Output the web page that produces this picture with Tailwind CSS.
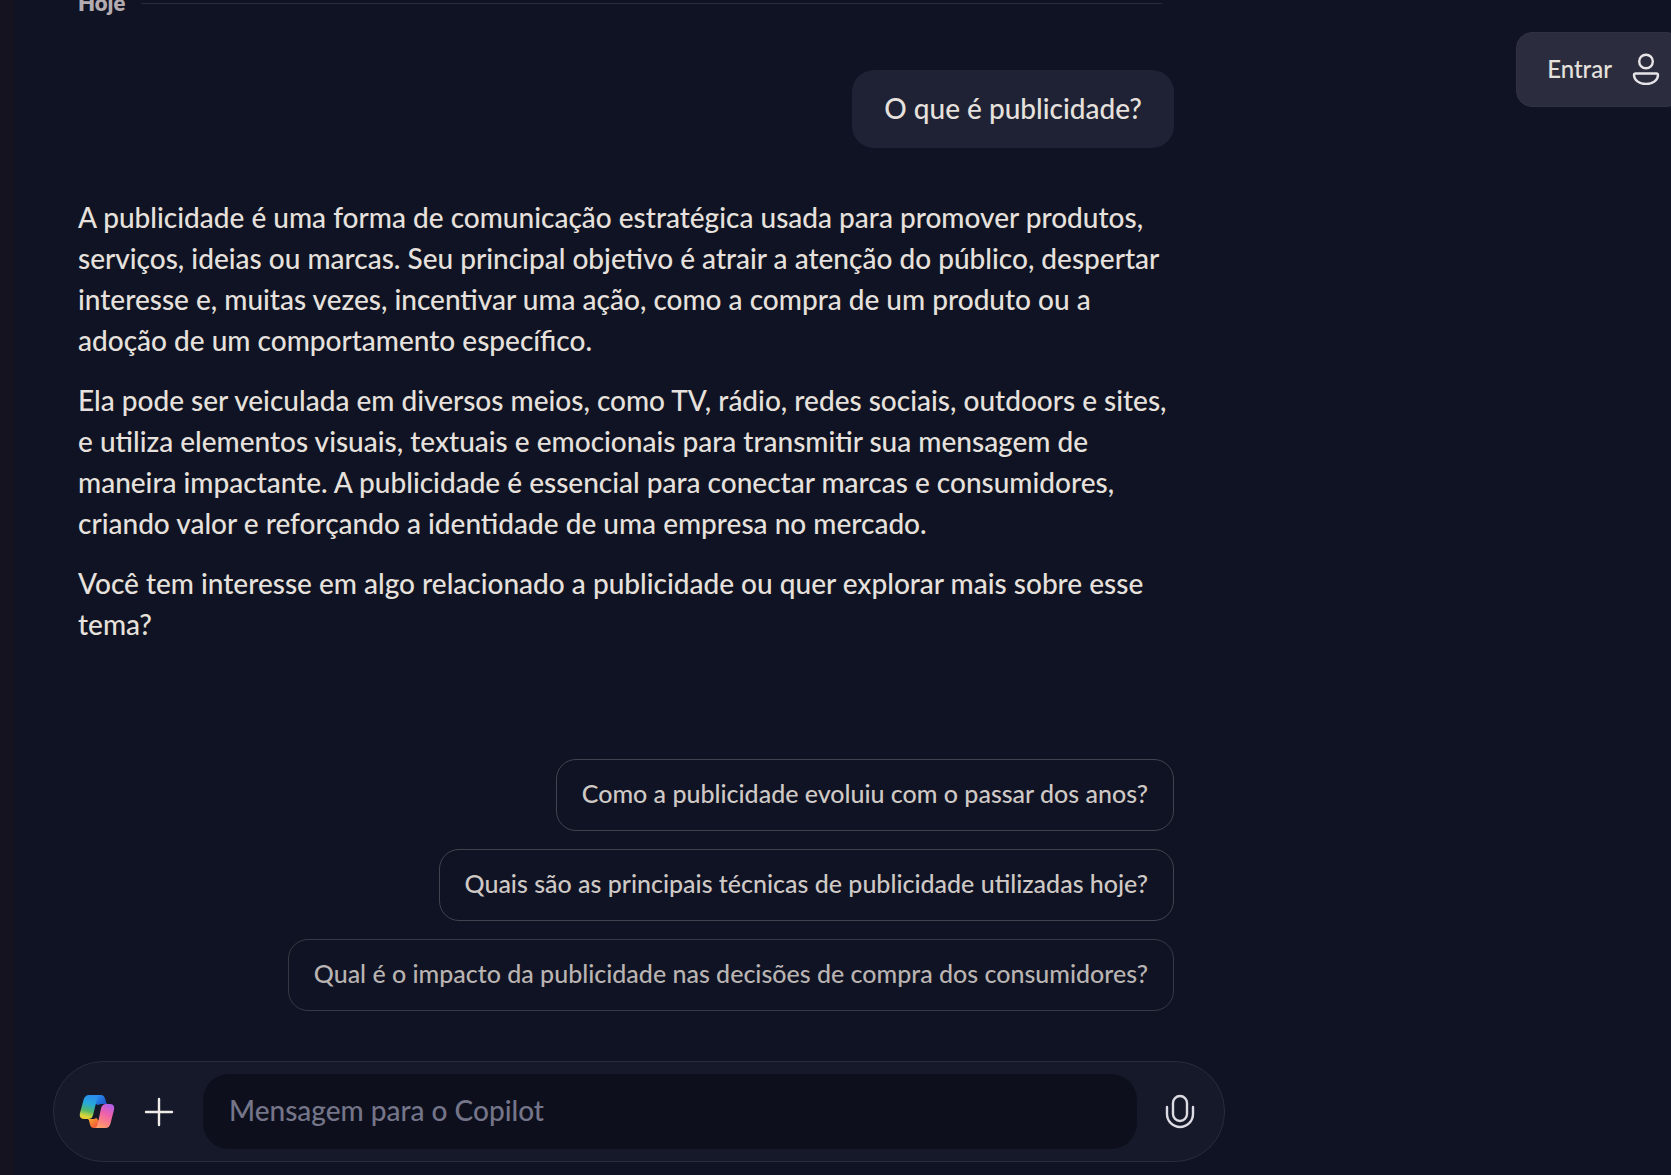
<!DOCTYPE html>
<html lang="pt-BR">
<head>
<meta charset="utf-8">
<meta name="viewport" content="width=device-width, initial-scale=1">
<title>Copilot</title>
<script src="https://cdn.jsdelivr.net/npm/@tailwindcss/browser@4"></script>
</head>
<body class="flex min-h-screen items-start overflow-hidden border-l-14 border-[#14131f] bg-[#101323] pl-[39px] font-['Lato',sans-serif] font-medium text-[#e6e1dd]">
  <main class="max-w-[1172px] flex-1">
    <section class="pr-[51px] pl-[25px]" aria-label="Conversa">
      <div class="-mt-[13px] flex h-8 items-center gap-4 pr-3">
        <h2 class="text-[22px] leading-7 font-extrabold text-[#b3abb0]">Hoje</h2>
        <hr class="flex-1 border-[#2c2b3a]">
      </div>

      <div class="mt-[51px] flex justify-end">
        <p class="rounded-[22px] bg-[#1f2135] px-8 pt-[17px] pb-[19px] text-[28px] leading-[42px]">O que é publicidade?</p>
      </div>

      <div class="mt-[49px] space-y-[19px] text-[28px] leading-[41px]">
        <p>A publicidade é uma forma de comunicação estratégica usada para promover produtos, serviços, ideias ou marcas. Seu principal objetivo é atrair a atenção do público, despertar interesse e, muitas vezes, incentivar uma ação, como a compra de um produto ou a adoção de um comportamento específico.</p>
        <p>Ela pode ser veiculada em diversos meios, como TV, rádio, redes sociais, outdoors e sites, e utiliza elementos visuais, textuais e emocionais para transmitir sua mensagem de maneira impactante. A publicidade é essencial para conectar marcas e consumidores, criando valor e reforçando a identidade de uma empresa no mercado.</p>
        <p>Você tem interesse em algo relacionado a publicidade ou quer explorar mais sobre esse tema?</p>
      </div>

      <div class="mt-[114px] flex flex-col items-end gap-[18px] text-[25px] leading-[34px] text-[#cfc9c6]">
        <button type="button" class="rounded-[20px] border border-[#42434f] px-[25px] pt-4 pb-5">Como a publicidade evoluiu com o passar dos anos?</button>
        <button type="button" class="rounded-[20px] border border-[#42434f] px-[25px] pt-4 pb-5">Quais são as principais técnicas de publicidade utilizadas hoje?</button>
        <button type="button" class="rounded-[20px] border border-[#383945] px-[25px] pt-4 pb-5 text-[#b9b4b2]">Qual é o impacto da publicidade nas decisões de compra dos consumidores?</button>
      </div>
    </section>

    <form class="mt-[50px] flex items-center rounded-[50px] border border-[#2a2c3a] bg-[#161929] py-3 pr-[26px] pl-[25px]">
      <button type="button" aria-label="Copilot" class="shrink-0">
        <svg class="size-9" viewBox="0 0 36 36" fill="none">
          <defs>
            <linearGradient id="sky" x1="12" y1="1" x2="6" y2="26" gradientUnits="userSpaceOnUse">
              <stop stop-color="#2a8df0"/><stop offset=".35" stop-color="#27a9d8"/><stop offset=".62" stop-color="#52b76b"/><stop offset=".85" stop-color="#d8d63a"/><stop offset="1" stop-color="#f5c32c"/>
            </linearGradient>
            <linearGradient id="rose" x1="31" y1="11" x2="20" y2="34" gradientUnits="userSpaceOnUse">
              <stop stop-color="#b560e6"/><stop offset=".35" stop-color="#ec5fb0"/><stop offset=".7" stop-color="#fb7f86"/><stop offset="1" stop-color="#ffa266"/>
            </linearGradient>
            <linearGradient id="fold" x1="18" y1="2" x2="27" y2="12" gradientUnits="userSpaceOnUse">
              <stop stop-color="#2a8df0"/><stop offset="1" stop-color="#1d4fc4"/>
            </linearGradient>
            <linearGradient id="ember" x1="9" y1="24" x2="17" y2="34" gradientUnits="userSpaceOnUse">
              <stop stop-color="#fbb02f"/><stop offset="1" stop-color="#f1513a"/>
            </linearGradient>
          </defs>
          <path d="M16 1h6c2.200 0 3.300 1.400 4 3.600l1.200 3.900c.3 1 1 1.500 2 1.500H24c-2.500 0-4 .5-5.500 1L16 9z" fill="url(#fold)"/>
          <path d="M20 34h-5c-2.200 0-3.400-1.400-4-3.600l-1-3.900c-.3-1-1-1.500-2-1.500h5c2.500 0 3.500-.5 4.500-1L20 27z" fill="url(#ember)"/>
          <path d="M10 1h12c-2.200 0-3.200 1.500-4 4l-3.800 15.500C13.400 23.500 12 25 9 25H5c-4 0-4.800-3-3.900-6.500L4.500 6C5.500 2.500 7.300 1 10 1z" fill="url(#sky)"/>
          <path d="M26.500 34H15c2 0 3-1.400 3.700-4l3.300-15.500C22.700 11.500 24.500 10 27 10H31c4 0 4.800 3 3.800 6.500l-3.300 13C30.500 32.500 29.200 34 26.500 34z" fill="url(#rose)"/>
        </svg>
      </button>
      <button type="button" aria-label="Adicionar" class="ml-7 shrink-0">
        <svg class="size-8" viewBox="0 0 32 32" fill="none" stroke="#efebe8" stroke-width="2.400" stroke-linecap="round"><path d="M16 3v26M3 16h26"/></svg>
      </button>
      <input type="text" aria-label="Mensagem para o Copilot" placeholder="Mensagem para o Copilot" class="ml-7 h-[75px] min-w-0 flex-1 rounded-[26px] bg-[#0d101c] px-[26px] pb-1 text-[28px] text-[#e6e1dd] outline-none placeholder:text-[#75758a]">
      <button type="button" aria-label="Falar com o Copilot" class="ml-[25px] shrink-0">
        <svg class="size-9" viewBox="0 0 36 36" fill="none" stroke="#dcdbe4" stroke-width="2.400" stroke-linecap="round"><rect x="11" y="2" width="14" height="25" rx="7"/><path d="M5 13v7a13 13 0 0 0 26 0v-7"/></svg>
      </button>
    </form>
  </main>

  <header class="mt-8 -mr-3 ml-auto shrink-0">
    <button type="button" class="flex h-[75px] items-center gap-[18px] rounded-2xl border border-[#303243] bg-[#2b2d3f] pr-5 pb-0.5 pl-[30px] text-2xl">
      Entrar
      <svg class="size-8" viewBox="0 0 32 32" fill="none" stroke="#e6e4e6" stroke-width="2.400"><circle cx="16" cy="8.500" r="6.800"/><path d="M5.500 20.500h21a1.500 1.500 0 0 1 1.500 1.500c0 5-5 9-12 9S4 27 4 22A1.500 1.500 0 0 1 5.500 20.500z"/></svg>
    </button>
  </header>
</body>
</html>
